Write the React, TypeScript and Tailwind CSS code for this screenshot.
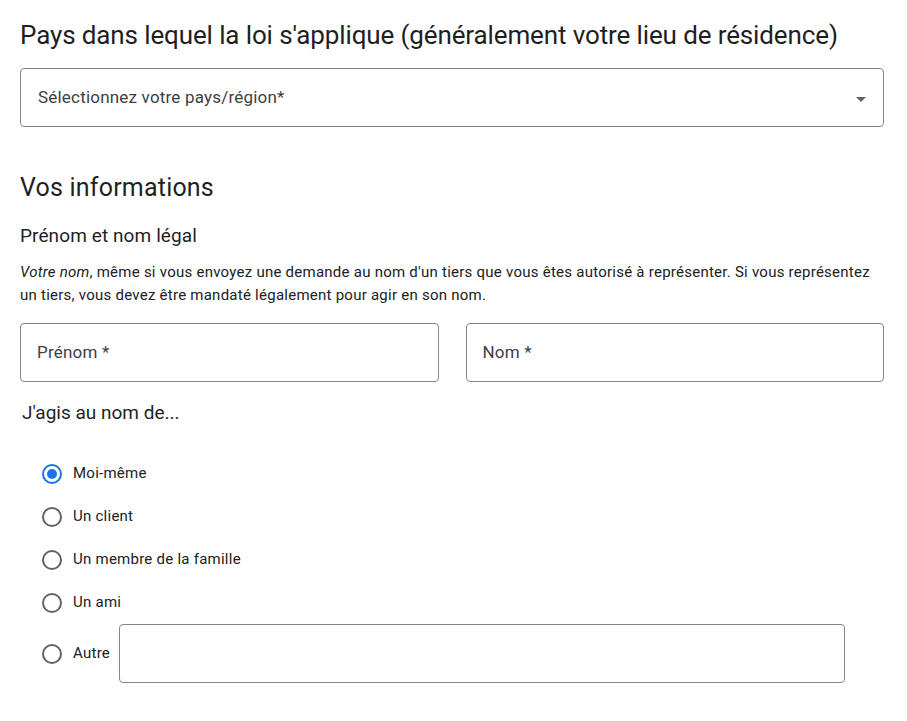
import React from "react";

const font = { fontFamily: "Roboto, 'Liberation Sans', sans-serif" };

function Radio({ checked }: { checked?: boolean }) {
  return checked ? (
    <span className="flex h-[20px] w-[20px] shrink-0 items-center justify-center rounded-full border-2 border-[#1a73e8]">
      <span className="h-[10px] w-[10px] rounded-full bg-[#1a73e8]" />
    </span>
  ) : (
    <span className="h-[20px] w-[20px] shrink-0 rounded-full border-2 border-[#5f6368]" />
  );
}

export default function App() {
  const options = ["Moi-même", "Un client", "Un membre de la famille", "Un ami"];
  return (
    <div className="min-h-[721px] w-[907px] bg-white text-[#202124]" style={font}>
      <div className="w-[884px] pl-[20px] pt-[19px]">
        <h1 className="text-[26px] leading-[32px] font-normal text-[#1f1f1f] tracking-[-0.12px]">
          Pays dans lequel la loi s'applique (généralement votre lieu de résidence)
        </h1>
        <div className="mt-[17px] flex h-[59px] items-center justify-between rounded-[4px] border border-[#80868b] pl-[17px] pr-[17px]">
          <span className="text-[17px] tracking-[0.2px] text-[#3c4043]">Sélectionnez votre pays/région*</span>
          <svg width="10" height="5" viewBox="0 0 10 5" className="mt-[4px]">
            <path d="M0 0 L10 0 L5 5 Z" fill="#5f6368" />
          </svg>
        </div>

        <h2 className="mt-[45px] text-[25px] leading-[32px] tracking-[0.2px] font-normal text-[#1f1f1f]">Vos informations</h2>
        <h3 className="mt-[18px] text-[19px] leading-[28px] tracking-[0.1px] font-normal text-[#1f1f1f]">Prénom et nom légal</h3>
        <p className="mt-[11px] text-[15px] leading-[23px] tracking-[0.25px] text-[#202124]">
          <em>Votre nom</em>, même si vous envoyez une demande au nom d'un tiers que vous êtes autorisé à représenter. Si vous représentez un tiers, vous devez être mandaté légalement pour agir en son nom.
        </p>

        <div className="mt-[16px] grid grid-cols-2 gap-[27px]">
          <div className="flex h-[59px] items-center rounded-[4px] border border-[#80868b] pl-[16px]">
            <span className="text-[17px] tracking-[0.2px] text-[#3c4043]">Prénom *</span>
          </div>
          <div className="flex h-[59px] items-center rounded-[4px] border border-[#80868b] pl-[16px]">
            <span className="text-[17px] tracking-[0.2px] text-[#3c4043]">Nom *</span>
          </div>
        </div>

        <h3 className="mt-[17px] pl-[2px] text-[19px] leading-[28px] font-normal text-[#1f1f1f]">J'agis au nom de...</h3>

        <div className="mt-[25px] flex flex-col pl-[22px]">
          {options.map((o, i) => (
            <div key={o} className="flex h-[43px] items-center gap-[11px]">
              <Radio checked={i === 0} />
              <span className="text-[15px] tracking-[0.25px] text-[#202124]">{o}</span>
            </div>
          ))}
          <div className="flex h-[59px] items-center">
            <Radio />
            <span className="ml-[11px] text-[15px] tracking-[0.25px] text-[#202124]">Autre</span>
            <div className="ml-[9px] h-[59px] w-[726px] rounded-[4px] border border-[#80868b]" />
          </div>
        </div>
      </div>
    </div>
  );
}
